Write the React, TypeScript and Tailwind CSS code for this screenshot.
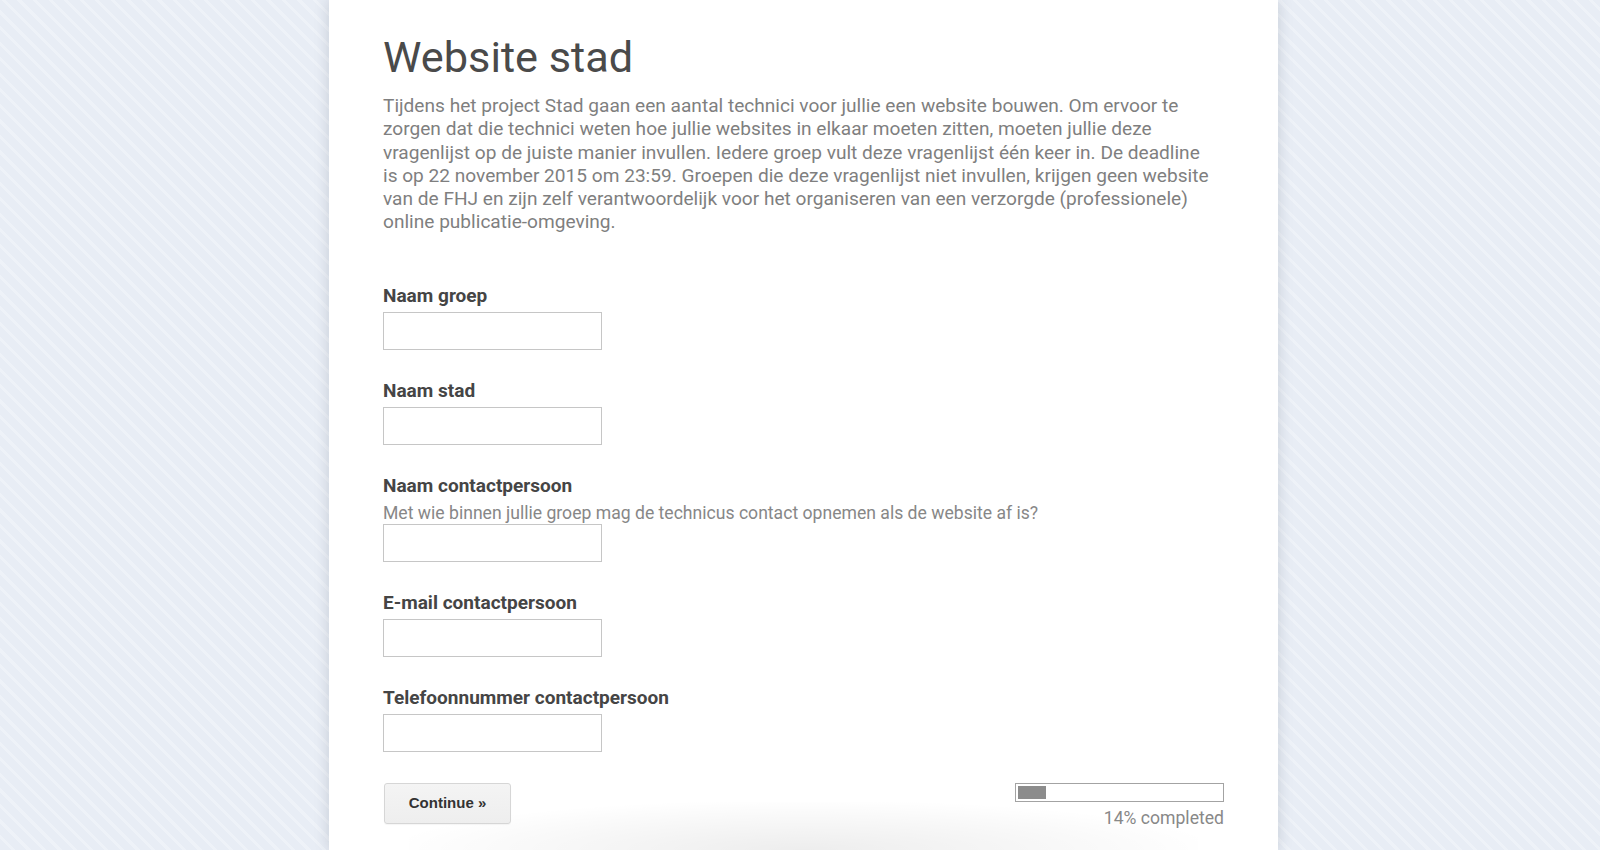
import React from "react";

function Field({ label, help }: { label: string; help?: string }) {
  return (
    <div className="flex flex-col">
      <div className="text-[19.05px] leading-[24px] font-bold text-[#454545]">{label}</div>
      {help && (
        <div className="mt-[6px] text-[17.6px] leading-[18px] text-[#878787]">{help}</div>
      )}
      <input
        type="text"
        className={`${help ? "mt-[2px]" : "mt-[4px]"} h-[38px] w-[219px] border border-[#c6c6c6] bg-white outline-none`}
      />
    </div>
  );
}

export default function App() {
  return (
    <div className="h-[850px] w-[1600px] overflow-hidden bg-[#e9eef6] bg-[repeating-linear-gradient(45deg,#e8edf5_0px,#e8edf5_8px,#eef2f8_8px,#eef2f8_11px)] font-['Roboto',sans-serif]">
      <div className="flex pl-[329px]">
        <div className="relative h-[850px] w-[949px] bg-white px-[54px] shadow-[0_0_14px_rgba(40,50,70,0.18)]">
          <div className="pointer-events-none absolute bottom-0 left-[80px] right-[80px] h-[48px] bg-[radial-gradient(ellipse_at_bottom,rgba(0,0,0,0.07),rgba(0,0,0,0.02)_55%,transparent_75%)]" />
          <div className="relative flex flex-col">
            <h1 className="mt-[32px] text-[43.3px] leading-[52px] font-normal text-[#4a4a4a]">
              Website stad
            </h1>
            <p className="mt-[10px] w-[831px] text-[19.1px] leading-[23.3px] text-[#7f7f7f]">
              Tijdens het project Stad gaan een aantal technici voor jullie een website bouwen. Om ervoor te zorgen dat die technici weten hoe jullie websites in elkaar moeten zitten, moeten jullie deze vragenlijst op de juiste manier invullen. Iedere groep vult deze vragenlijst één keer in. De deadline is op 22 november 2015 om 23:59. Groepen die deze vragenlijst niet invullen, krijgen geen website van de FHJ en zijn zelf verantwoordelijk voor het organiseren van een verzorgde (professionele) online publicatie-omgeving.
            </p>
            <div className="mt-[50px] flex flex-col gap-[29px]">
              <Field label="Naam groep" />
              <Field label="Naam stad" />
              <Field
                label="Naam contactpersoon"
                help="Met wie binnen jullie groep mag de technicus contact opnemen als de website af is?"
              />
              <Field label="E-mail contactpersoon" />
              <Field label="Telefoonnummer contactpersoon" />
            </div>
            <div className="mt-[31px] flex items-start justify-between">
              <button className="ml-[1px] h-[41px] w-[127px] rounded-[3px] border border-[#d6d6d6] bg-[linear-gradient(#f4f4f4,#eeeeee)] font-['Liberation_Sans',Arial,sans-serif] text-[15px] font-bold text-[#333333] shadow-[0_1px_1px_rgba(0,0,0,0.04)]">
                Continue »
              </button>
              <div className="flex flex-col items-end">
                <div className="h-[19px] w-[209px] border border-[#a3a3a3] bg-white p-[2px]">
                  <div className="h-full bg-[#8c8c8c]" style={{ width: "14%" }} />
                </div>
                <div className="mt-[5px] text-[17.6px] leading-[22px] text-[#888888]">
                  14% completed
                </div>
              </div>
            </div>
          </div>
        </div>
      </div>
    </div>
  );
}
